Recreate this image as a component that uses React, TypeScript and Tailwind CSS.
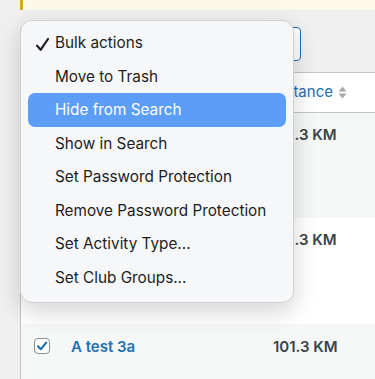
import React from "react";

const items = [
  "Bulk actions",
  "Move to Trash",
  "Hide from Search",
  "Show in Search",
  "Set Password Protection",
  "Remove Password Protection",
  "Set Activity Type...",
  "Set Club Groups...",
];

export default function App() {
  return (
    <div
      className="relative w-[375px] h-[379px] overflow-hidden bg-[#f0f0f1] pl-5"
      style={{ fontFamily: "Inter, 'Noto Sans', sans-serif" }}
    >
      {/* notice */}
      <div className="h-[10px] w-[400px] bg-[#fcf9e8] border-l-[3px] border-[#dba617]" />

      {/* select */}
      <div className="mt-[17px] h-[34px] w-[281px] rounded border border-[#2271b1] bg-white" />

      {/* table */}
      <div className="mt-[11px] w-[400px] border-l border-t border-[#c3c4c7] bg-white">
        <div className="h-[40px] border-b border-[#c3c4c7] flex items-center">
          <div className="ml-[250px] flex items-center gap-[5px]">
            <span className="text-[15px] text-[#2271b1]">Distance</span>
            <svg width="9" height="13" viewBox="0 0 9 13">
              <path d="M4.5 0.5 L8.5 5.5 L0.5 5.5 Z" fill="#a7aaad" />
              <path d="M0.5 7.5 L8.5 7.5 L4.5 12.5 Z" fill="#a7aaad" />
            </svg>
          </div>
        </div>
        <div className="h-[105px] bg-[#f6f7f7] pt-[11px]">
          <div className="ml-[251px] text-[15px] font-semibold text-[#3c434a]">101.3 KM</div>
        </div>
        <div className="h-[106px] bg-white pt-[11px]">
          <div className="ml-[251px] text-[15px] font-semibold text-[#3c434a]">101.3 KM</div>
        </div>
        <div className="h-[60px] bg-[#f6f7f7] pt-[12px] flex items-start">
          <div className="ml-[13px] mt-[2px] w-[16px] h-[16px] rounded-[4px] border border-[#8c8f94] bg-white flex items-center justify-center">
            <svg width="12" height="12" viewBox="0 0 12 12">
              <path d="M2 6.3 L4.8 9.2 L10.2 2.6" stroke="#2271b1" strokeWidth="2.2" fill="none" strokeLinecap="round" strokeLinejoin="round" />
            </svg>
          </div>
          <div className="ml-[21px] w-[202px] text-[15px] font-semibold text-[#2271b1]">A test 3a</div>
          <div className="text-[15px] font-semibold text-[#3c434a]">101.3 KM</div>
        </div>
      </div>

      {/* dropdown menu */}
      <div className="absolute left-[20px] top-[20px] w-[274px] rounded-[12px] bg-[#f6f7f8] border border-[#cfd1d4] shadow-[0_8px_24px_rgba(0,0,0,0.18)] pt-[5px] pb-[8px] px-[7px]">
        {items.map((t, i) => (
          <div
            key={t}
            className={
              i === 2
                ? "h-[33.5px] rounded-[7px] bg-[#5b9df7] text-white flex items-center pl-[27px] pt-[2px] text-[15.3px]"
                : "h-[33.5px] rounded-[7px] text-[#1d1d1f] flex items-center pl-[27px] pt-[2px] text-[15.3px] relative"
            }
          >
            {i === 0 && (
              <svg className="absolute left-[7px] top-[11px]" width="15" height="15" viewBox="0 0 15 15">
                <path d="M2 8.6 L5.6 12.8 L13 2" stroke="#1d1d1f" strokeWidth="2.2" fill="none" strokeLinecap="round" strokeLinejoin="round" />
              </svg>
            )}
            {t}
          </div>
        ))}
      </div>
    </div>
  );
}
